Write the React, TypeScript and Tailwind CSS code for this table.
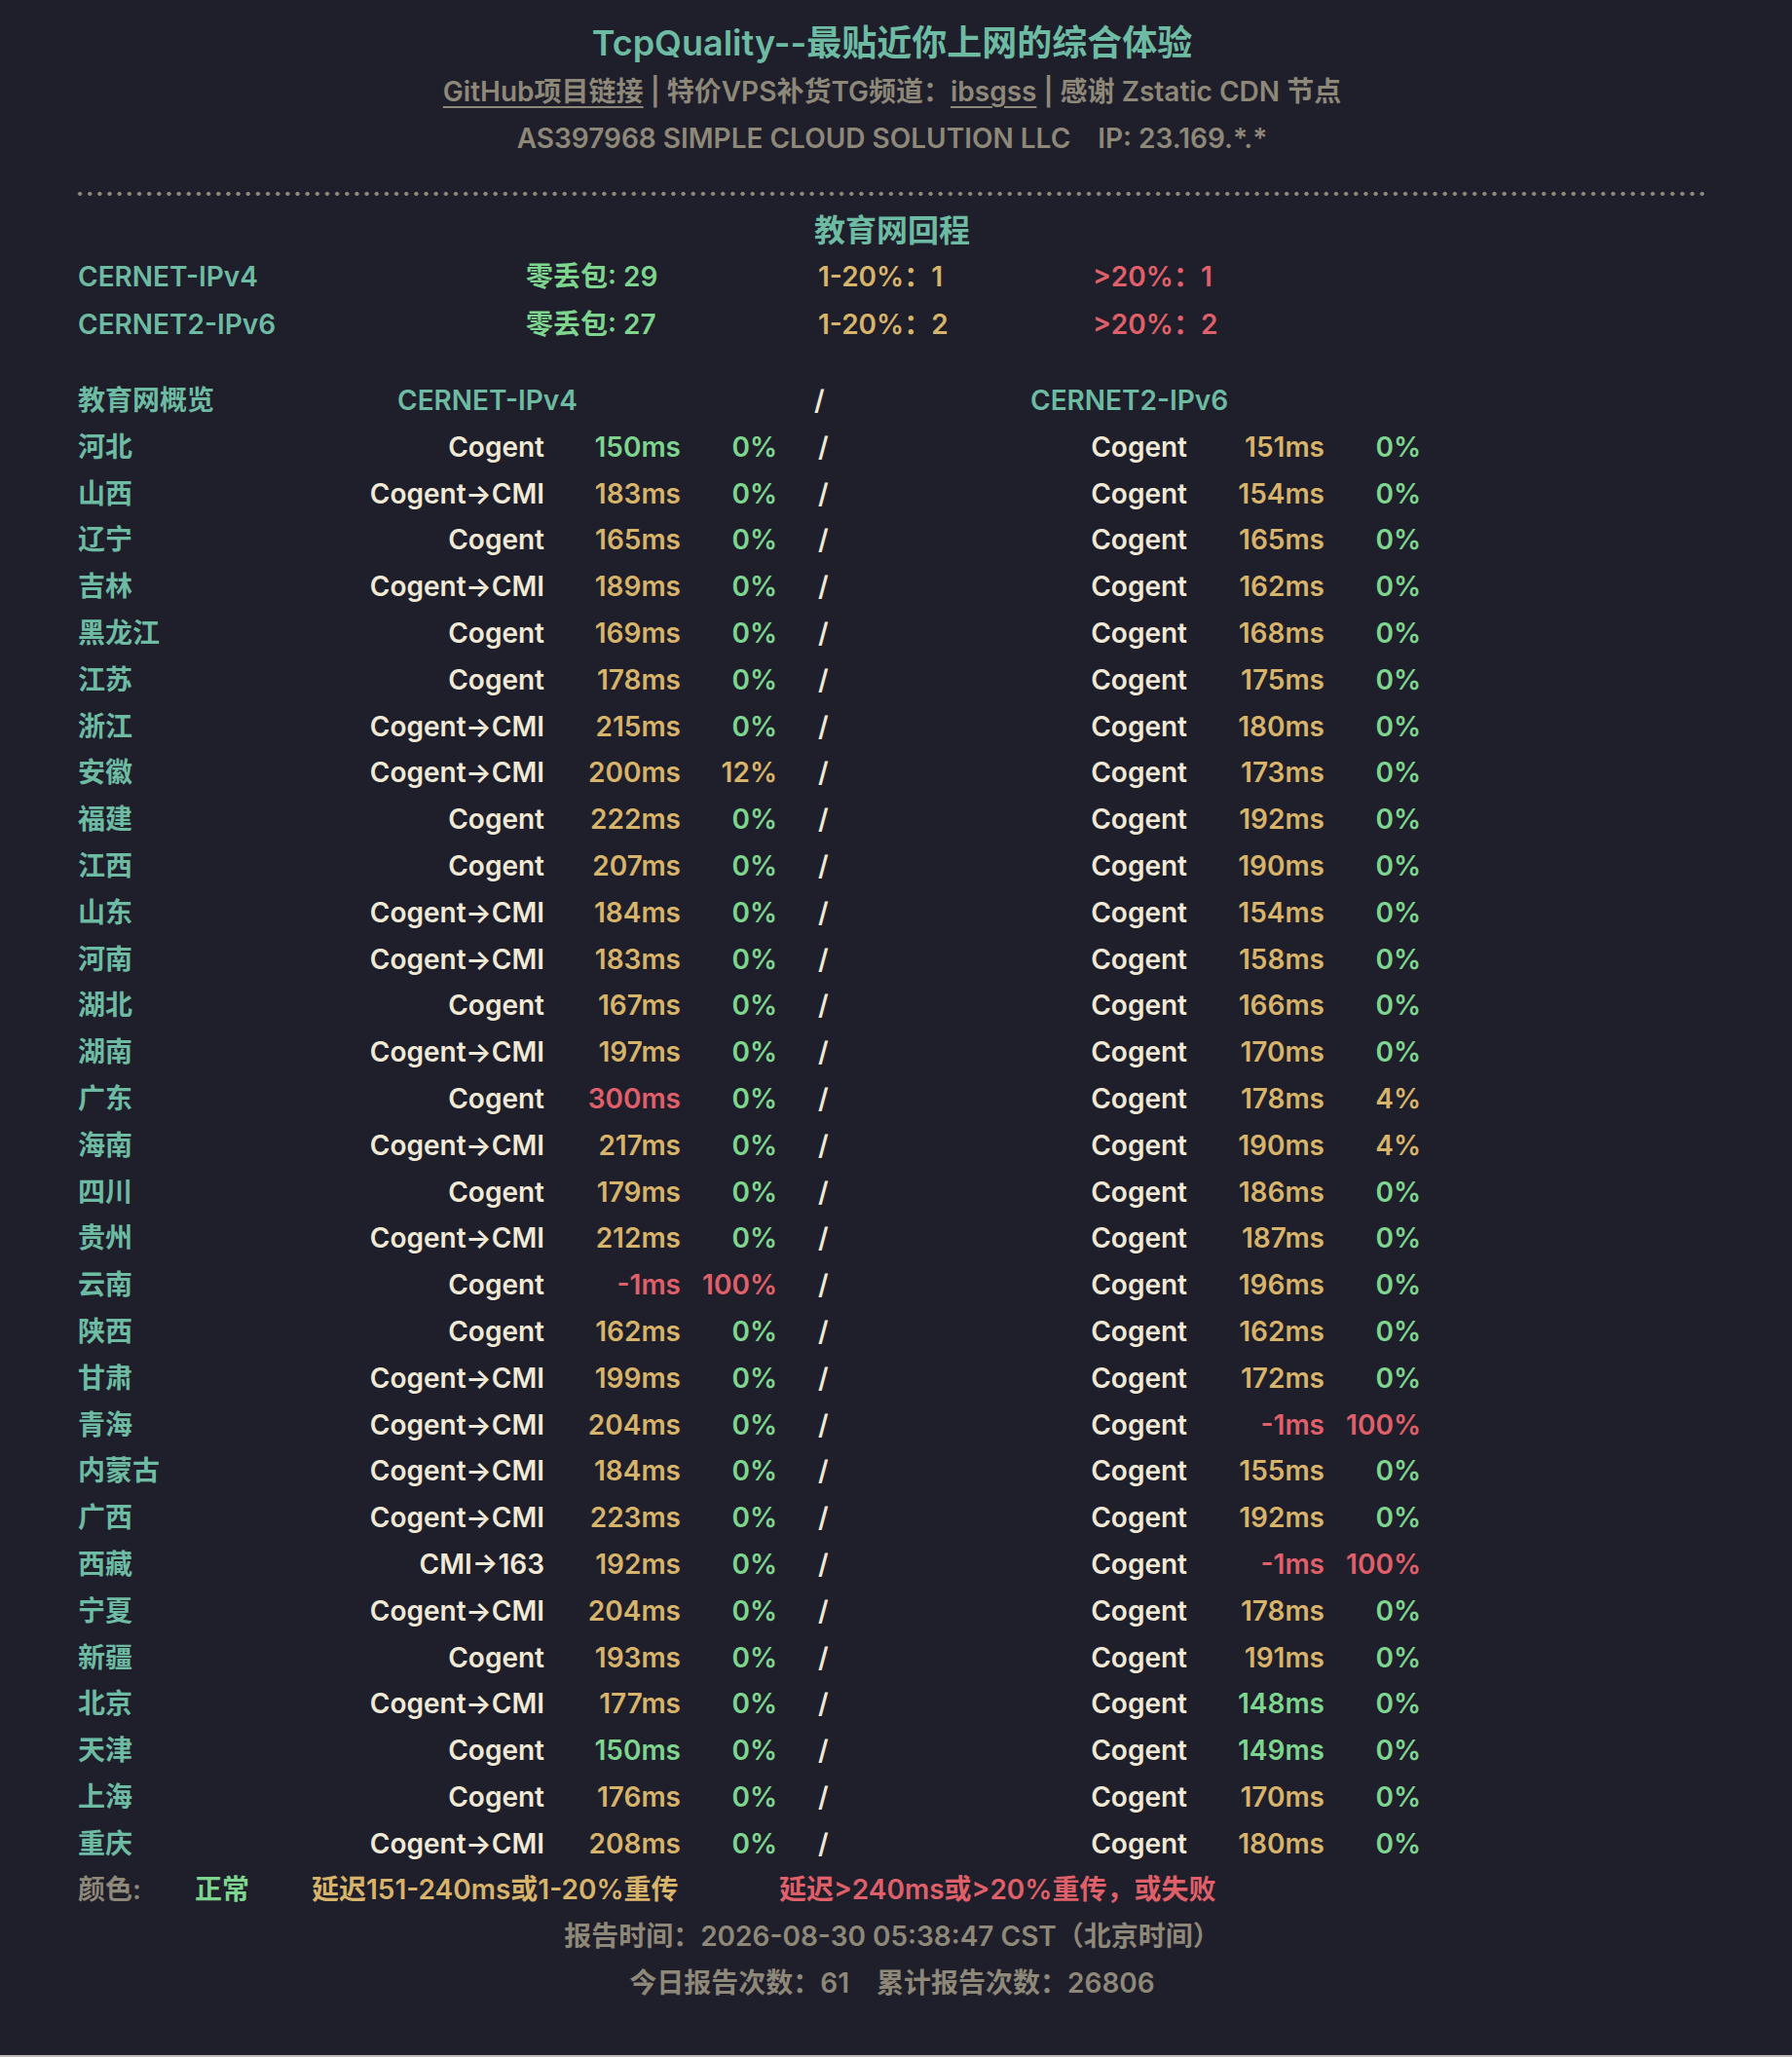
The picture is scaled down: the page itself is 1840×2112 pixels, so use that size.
import React from 'react';

type Row = [string, string, number, number, string, number, number];

const ROWS: Row[] = [
  ['河北', 'Cogent', 150, 0, 'Cogent', 151, 0],
  ['山西', 'Cogent→CMI', 183, 0, 'Cogent', 154, 0],
  ['辽宁', 'Cogent', 165, 0, 'Cogent', 165, 0],
  ['吉林', 'Cogent→CMI', 189, 0, 'Cogent', 162, 0],
  ['黑龙江', 'Cogent', 169, 0, 'Cogent', 168, 0],
  ['江苏', 'Cogent', 178, 0, 'Cogent', 175, 0],
  ['浙江', 'Cogent→CMI', 215, 0, 'Cogent', 180, 0],
  ['安徽', 'Cogent→CMI', 200, 12, 'Cogent', 173, 0],
  ['福建', 'Cogent', 222, 0, 'Cogent', 192, 0],
  ['江西', 'Cogent', 207, 0, 'Cogent', 190, 0],
  ['山东', 'Cogent→CMI', 184, 0, 'Cogent', 154, 0],
  ['河南', 'Cogent→CMI', 183, 0, 'Cogent', 158, 0],
  ['湖北', 'Cogent', 167, 0, 'Cogent', 166, 0],
  ['湖南', 'Cogent→CMI', 197, 0, 'Cogent', 170, 0],
  ['广东', 'Cogent', 300, 0, 'Cogent', 178, 4],
  ['海南', 'Cogent→CMI', 217, 0, 'Cogent', 190, 4],
  ['四川', 'Cogent', 179, 0, 'Cogent', 186, 0],
  ['贵州', 'Cogent→CMI', 212, 0, 'Cogent', 187, 0],
  ['云南', 'Cogent', -1, 100, 'Cogent', 196, 0],
  ['陕西', 'Cogent', 162, 0, 'Cogent', 162, 0],
  ['甘肃', 'Cogent→CMI', 199, 0, 'Cogent', 172, 0],
  ['青海', 'Cogent→CMI', 204, 0, 'Cogent', -1, 100],
  ['内蒙古', 'Cogent→CMI', 184, 0, 'Cogent', 155, 0],
  ['广西', 'Cogent→CMI', 223, 0, 'Cogent', 192, 0],
  ['西藏', 'CMI→163', 192, 0, 'Cogent', -1, 100],
  ['宁夏', 'Cogent→CMI', 204, 0, 'Cogent', 178, 0],
  ['新疆', 'Cogent', 193, 0, 'Cogent', 191, 0],
  ['北京', 'Cogent→CMI', 177, 0, 'Cogent', 148, 0],
  ['天津', 'Cogent', 150, 0, 'Cogent', 149, 0],
  ['上海', 'Cogent', 176, 0, 'Cogent', 170, 0],
  ['重庆', 'Cogent→CMI', 208, 0, 'Cogent', 180, 0],
];

const GREEN = 'text-[#7dd58e]';
const GOLD = 'text-[#d8b46a]';
const RED = 'text-[#e0606a]';

const msColor = (ms: number) => (ms < 0 || ms > 240 ? RED : ms > 150 ? GOLD : GREEN);
const lossColor = (p: number) => (p > 20 ? RED : p > 0 ? GOLD : GREEN);

const DataRow = ({ r }: { r: Row }) => (
  <div className="grid grid-cols-[280px_199px_140px_99px_202px_219px_141px_99px] h-[47.8px] items-center">
    <span className="text-[#6dbba2]">{r[0]}</span>
    <span className="text-right text-[#efe9d5]">{r[1]}</span>
    <span className={`text-right ${msColor(r[2])}`}>{r[2]}ms</span>
    <span className={`text-right ${lossColor(r[3])}`}>{r[3]}%</span>
    <span className="pl-[42px] text-[#efe9d5]">/</span>
    <span className="text-right text-[#efe9d5]">{r[4]}</span>
    <span className={`text-right ${msColor(r[5])}`}>{r[5]}ms</span>
    <span className={`text-right ${lossColor(r[6])}`}>{r[6]}%</span>
  </div>
);

export default function App() {
  return (
    <div
      className="min-h-[2112px] bg-[#1f1e2b] border-b-2 border-[#bdbbb8] font-semibold text-[28px] leading-[47.7px]"
      style={{ fontFamily: 'Inter, "Noto Sans CJK SC", sans-serif' }}
    >
      <div className="pl-[77px] pr-[85px] pt-[18px]">
        <div className="text-center text-[36px] leading-[53px] text-[#6dbba2]">TcpQuality--最贴近你上网的综合体验</div>
        <div className="text-center h-[47.7px] text-[#8e8878]">
          <span className="underline underline-offset-[5px] decoration-2">GitHub项目链接</span> | 特价VPS补货TG频道：
          <span className="underline underline-offset-[5px] decoration-2">ibsgss</span> | 感谢 Zstatic CDN 节点
        </div>
        <div className="text-center h-[47.7px] text-[#8e8878]">
          AS397968 SIMPLE CLOUD SOLUTION LLC<span className="ml-[28px]">IP: 23.169.*.*</span>
        </div>

        <div className="mt-[30px] h-[6px] bg-[radial-gradient(circle,#8e8878_1.8px,transparent_2.4px)] bg-[length:10.17px_6px] bg-repeat-x" />

        <div className="mt-[11px] text-center text-[32px] h-[47.7px] leading-[47.7px] text-[#6dbba2]">教育网回程</div>

        <div className="pl-[3px]">
          <div className="grid grid-cols-[460px_300px_282px_auto] h-[48.5px] items-center">
            <span className="text-[#6dbba2]">CERNET-IPv4</span>
            <span className={GREEN}>零丢包: 29</span>
            <span className={GOLD}>1-20%：1</span>
            <span className={RED}>&gt;20%：1</span>
          </div>
          <div className="grid grid-cols-[460px_300px_282px_auto] h-[48.5px] items-center">
            <span className="text-[#6dbba2]">CERNET2-IPv6</span>
            <span className={GREEN}>零丢包: 27</span>
            <span className={GOLD}>1-20%：2</span>
            <span className={RED}>&gt;20%：2</span>
          </div>

          <div className="mt-[30px] grid grid-cols-[328px_428px_222px_auto] h-[47.7px] items-center">
            <span className="text-[#6dbba2]">教育网概览</span>
            <span className="text-[#6dbba2]">CERNET-IPv4</span>
            <span className="text-[#efe9d5]">/</span>
            <span className="text-[#6dbba2]">CERNET2-IPv6</span>
          </div>

          {ROWS.map((r) => (
            <DataRow key={r[0]} r={r} />
          ))}

          <div className="grid grid-cols-[120px_120px_480px_auto] h-[47.7px] items-center">
            <span className="text-[#8e8878]">颜色:</span>
            <span className={GREEN}>正常</span>
            <span className={GOLD}>延迟151-240ms或1-20%重传</span>
            <span className={RED}>延迟&gt;240ms或&gt;20%重传，或失败</span>
          </div>
        </div>

        <div className="text-center h-[47.7px] text-[#8e8878]">报告时间：2026-08-30 05:38:47 CST（北京时间）</div>
        <div className="text-center h-[47.7px] text-[#8e8878]">
          今日报告次数：61<span className="ml-[28px]">累计报告次数：26806</span>
        </div>
      </div>
    </div>
  );
}
